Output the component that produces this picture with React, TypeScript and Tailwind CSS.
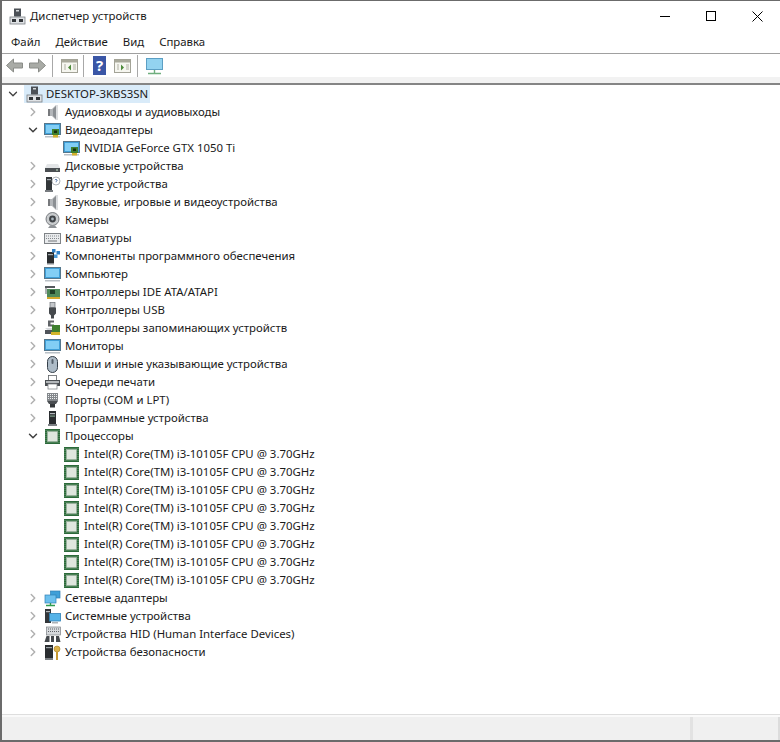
import type { ReactNode } from 'react'
import { ChevronRight, ChevronDown } from 'lucide-react'

const Svg = ({ children }: { children: ReactNode }) => (
  <svg width={17} height={17} viewBox="0 0 17 17" className="shrink-0">
    {children}
  </svg>
)

const Screen = () => (
  <>
    <rect x="0.5" y="1.5" width="16" height="11" fill="#3f9fd8" stroke="#55778c" />
    <rect x="2" y="3" width="13" height="8" fill="#82cef5" />
    <rect x="1" y="14" width="15" height="1.5" fill="#b9c0c6" />
  </>
)

const Speaker = () => (
  <>
    <path d="M4 5h4l4-4h1v15h-1l-4-4H4z" fill="#b3b6b9" />
    <path d="M9 5l3-3v13l-3-3z" fill="#8b8f93" />
    <path d="M4 5h2v7H4z" fill="#77797c" />
    <path d="M12 1h2v15h-2z" fill="#dcdee0" />
  </>
)

const icons: Record<string, ReactNode> = {
  computer: (
    <Svg>
      <rect x="5" y="0.5" width="7" height="8" fill="#4c5157" />
      <rect x="7" y="2" width="3" height="1.5" fill="#d4d8db" />
      <rect x="6" y="8" width="5" height="1" fill="#8d9296" />
      <rect x="1" y="9" width="15" height="7" fill="#dfe2e5" stroke="#7b8086" strokeWidth="0.8" />
      <rect x="3" y="11" width="4" height="3" fill="#33373b" />
      <rect x="10" y="11" width="4" height="3" fill="#33373b" />
    </Svg>
  ),
  speaker: <Svg><Speaker /></Svg>,
  monitor: <Svg><Screen /></Svg>,
  video: (
    <Svg>
      <Screen />
      <rect x="8" y="7" width="7" height="6" fill="#3f7f2f" />
      <rect x="10" y="8.5" width="3" height="2.5" fill="#16300f" />
      <rect x="9" y="13" width="5" height="2.5" fill="#d3b02c" />
    </Svg>
  ),
  disk: (
    <Svg>
      <path d="M3 6h11l2 4H1z" fill="#e3e5e7" />
      <rect x="1" y="10" width="15" height="4" fill="#4a4e52" />
      <rect x="12" y="11.5" width="2" height="1" fill="#c8e8c8" />
    </Svg>
  ),
  unknown: (
    <Svg>
      <rect x="2" y="1" width="6" height="13" fill="#33373a" />
      <rect x="3" y="3" width="4" height="1.2" fill="#a6abaf" />
      <rect x="1" y="14" width="8" height="2" fill="#777b7f" />
      <circle cx="12" cy="5" r="4" fill="#fff" stroke="#9aa0a5" strokeWidth="0.8" />
      <path d="M10.8 4q1.2-1.6 2.4 0q0 1.1-1.2 1.5v.8" fill="none" stroke="#5577aa" strokeWidth="0.9" />
    </Svg>
  ),
  camera: (
    <Svg>
      <circle cx="8.5" cy="7" r="6.5" fill="#c9ccce" stroke="#5f6368" strokeWidth="0.8" />
      <circle cx="8.5" cy="7" r="3.4" fill="#3f4347" />
      <circle cx="8.5" cy="7" r="1.4" fill="#a9b5bd" />
      <path d="M4 16h9l-2-2.5H6z" fill="#8e9296" />
    </Svg>
  ),
  keyboard: (
    <Svg>
      <rect x="0.5" y="3.5" width="16" height="10" fill="#e9ebed" stroke="#7f8387" />
      <path d="M2 6h13M2 8.5h13" stroke="#85898d" strokeWidth="1.2" strokeDasharray="1 1" />
      <path d="M4 11h9" stroke="#85898d" strokeWidth="1.2" />
    </Svg>
  ),
  software: (
    <Svg>
      <rect x="3" y="4" width="7" height="11" fill="#2a2d30" />
      <rect x="4" y="6" width="5" height="1.2" fill="#9fa5a9" />
      <rect x="8" y="1" width="3.5" height="3.5" fill="#2f7fc4" />
      <rect x="12.5" y="3" width="3.5" height="3.5" fill="#2f7fc4" />
      <rect x="10" y="6.5" width="3.5" height="3.5" fill="#4c9bd8" />
      <rect x="3" y="15" width="7" height="1.5" fill="#85898d" />
    </Svg>
  ),
  ide: (
    <Svg>
      <rect x="1" y="2" width="10" height="2" fill="#55595d" />
      <rect x="1" y="4" width="2" height="6" fill="#aeb2b5" />
      <rect x="3" y="5" width="13" height="8" fill="#4f8a5a" />
      <rect x="6" y="6" width="5" height="4" fill="#1f3f28" />
      <rect x="3" y="13" width="13" height="2" fill="#d3a92c" />
    </Svg>
  ),
  usb: (
    <Svg>
      <rect x="6" y="0.5" width="5" height="5" fill="#c4c7ca" stroke="#6c7075" strokeWidth="0.7" />
      <path d="M5 5.5h7v6l-2 2v3H7v-3l-2-2z" fill="#45494d" />
    </Svg>
  ),
  storage: (
    <Svg>
      <path d="M4 0.5h6v2H6.5v2H10v2H4z" fill="#5f6367" />
      <path d="M1 8h9l3 2.5H4z" fill="#d4d7da" />
      <rect x="1" y="10" width="8" height="4" fill="#50545a" />
      <rect x="8" y="5" width="8" height="7" fill="#3f7f2f" />
      <rect x="7" y="12" width="9" height="3" fill="#d3b52c" />
    </Svg>
  ),
  mouse: (
    <Svg>
      <rect x="3.5" y="0.5" width="10" height="16" rx="5" fill="#adbbc7" stroke="#343e48" />
      <rect x="7.5" y="3" width="2" height="5" rx="1" fill="#55606b" />
    </Svg>
  ),
  printer: (
    <Svg>
      <rect x="4.5" y="1.5" width="8" height="5" fill="#fff" stroke="#5f6367" strokeWidth="0.8" />
      <path d="M1 6h15v6H1z" fill="#4a4e52" />
      <rect x="2" y="7" width="13" height="2" fill="#b3b7ba" />
      <rect x="4" y="10" width="9" height="5" fill="#fff" stroke="#85898d" strokeWidth="0.8" />
    </Svg>
  ),
  port: (
    <Svg>
      <rect x="3" y="1" width="11" height="8" fill="#83878b" />
      <path d="M4 2.5h9M4 4.5h9M4 6.5h9" stroke="#eceef0" strokeDasharray="1 1" />
      <path d="M3 9h11l-2 3H5z" fill="#4a4e52" />
      <rect x="6" y="12" width="5" height="3.5" fill="#33373a" />
    </Svg>
  ),
  firmware: (
    <Svg>
      <rect x="5" y="1" width="7" height="13" fill="#2a2d30" />
      <rect x="6" y="3" width="5" height="1.2" fill="#b4b9bd" />
      <rect x="6" y="5.5" width="5" height="1.2" fill="#7fa08a" />
      <rect x="4" y="14" width="9" height="2" fill="#7d8185" />
    </Svg>
  ),
  cpu: (
    <Svg>
      <rect x="1" y="1" width="15" height="15" fill="#2c6a3a" />
      <path d="M1 2.5h15M1 4.5h15M1 6.5h15M1 8.5h15M1 10.5h15M1 12.5h15M1 14.5h15" stroke="#7aa582" strokeWidth="0.4" />
      <rect x="3.5" y="3.5" width="10" height="10" fill="#dfe6de" stroke="#9fb6a2" strokeWidth="0.7" />
    </Svg>
  ),
  network: (
    <Svg>
      <rect x="6.5" y="1" width="9.5" height="7" fill="#3f9fd8" stroke="#2e7fb5" strokeWidth="0.7" />
      <rect x="1" y="5" width="11" height="8" fill="#6cc0ee" stroke="#2e7fb5" strokeWidth="0.7" />
      <path d="M6.5 13v2M2 15.5h9" stroke="#2f9c50" strokeWidth="1.4" />
    </Svg>
  ),
  system: (
    <Svg>
      <rect x="1" y="1" width="6" height="14" fill="#33373a" />
      <rect x="2" y="3" width="4" height="1.2" fill="#b4b9bd" />
      <rect x="5.5" y="5.5" width="11" height="7.5" fill="#55b3e8" stroke="#2e7fb5" strokeWidth="0.8" />
      <rect x="8" y="14" width="6" height="1.5" fill="#aeb2b5" />
    </Svg>
  ),
  hid: (
    <Svg>
      <rect x="2.5" y="1" width="14" height="8" fill="#d6d9dc" stroke="#7b8085" strokeWidth="0.7" />
      <path d="M4 3h11M4 5.5h11" stroke="#5f6367" strokeDasharray="1 1" />
      <path d="M0.5 16l2-6h3v6zM7 16v-6h3v6zM12 16v-6h3l1.5 6z" fill="#44484c" />
    </Svg>
  ),
  security: (
    <Svg>
      <rect x="1" y="1" width="8" height="13" fill="#2a2d30" />
      <rect x="2" y="3" width="6" height="1.2" fill="#9fa5a9" />
      <rect x="1" y="14" width="8" height="2" fill="#7d8185" />
      <circle cx="13" cy="5" r="3" fill="#dcb24a" stroke="#a67d1f" strokeWidth="0.6" />
      <path d="M12 8h2v8h-2z" fill="#c99a32" />
    </Svg>
  ),
}

type Row = { label: string; icon: string; level: 0 | 1 | 2; open?: boolean }

const cpuName = 'Intel(R) Core(TM) i3-10105F CPU @ 3.70GHz'

const rows: Row[] = [
  { label: 'DESKTOP-3KBS3SN', icon: 'computer', level: 0, open: true },
  { label: 'Аудиовходы и аудиовыходы', icon: 'speaker', level: 1 },
  { label: 'Видеоадаптеры', icon: 'video', level: 1, open: true },
  { label: 'NVIDIA GeForce GTX 1050 Ti', icon: 'video', level: 2 },
  { label: 'Дисковые устройства', icon: 'disk', level: 1 },
  { label: 'Другие устройства', icon: 'unknown', level: 1 },
  { label: 'Звуковые, игровые и видеоустройства', icon: 'speaker', level: 1 },
  { label: 'Камеры', icon: 'camera', level: 1 },
  { label: 'Клавиатуры', icon: 'keyboard', level: 1 },
  { label: 'Компоненты программного обеспечения', icon: 'software', level: 1 },
  { label: 'Компьютер', icon: 'monitor', level: 1 },
  { label: 'Контроллеры IDE ATA/ATAPI', icon: 'ide', level: 1 },
  { label: 'Контроллеры USB', icon: 'usb', level: 1 },
  { label: 'Контроллеры запоминающих устройств', icon: 'storage', level: 1 },
  { label: 'Мониторы', icon: 'monitor', level: 1 },
  { label: 'Мыши и иные указывающие устройства', icon: 'mouse', level: 1 },
  { label: 'Очереди печати', icon: 'printer', level: 1 },
  { label: 'Порты (COM и LPT)', icon: 'port', level: 1 },
  { label: 'Программные устройства', icon: 'firmware', level: 1 },
  { label: 'Процессоры', icon: 'cpu', level: 1, open: true },
  ...Array.from({ length: 8 }, (): Row => ({ label: cpuName, icon: 'cpu', level: 2 })),
  { label: 'Сетевые адаптеры', icon: 'network', level: 1 },
  { label: 'Системные устройства', icon: 'system', level: 1 },
  { label: 'Устройства HID (Human Interface Devices)', icon: 'hid', level: 1 },
  { label: 'Устройства безопасности', icon: 'security', level: 1 },
]

function TreeRow({ row }: { row: Row }) {
  const Chevron = row.open ? ChevronDown : ChevronRight
  if (row.level === 0) {
    return (
      <div className="flex h-[18px] items-center pl-[4px]">
        <Chevron size={14} strokeWidth={2.25} className="shrink-0 text-[#404040]" />
        <div className="ml-[4px] flex h-[18px] w-[126px] items-center bg-[#d9ebf9] pl-[2px]">
          {icons[row.icon]}
          <span className="ml-[3px] whitespace-nowrap">{row.label}</span>
        </div>
      </div>
    )
  }
  if (row.level === 2) {
    return (
      <div className="flex h-[18px] items-center pl-[61px]">
        {icons[row.icon]}
        <span className="ml-[4px] whitespace-nowrap">{row.label}</span>
      </div>
    )
  }
  return (
    <div className="flex h-[18px] items-center pl-[24px]">
      <Chevron
        size={14}
        strokeWidth={2.5}
        className={`shrink-0 ${row.open ? 'text-[#404040]' : 'text-[#b0b0b0]'}`}
      />
      <div className="ml-[4px] flex items-center">
        {icons[row.icon]}
        <span className="ml-[4px] whitespace-nowrap">{row.label}</span>
      </div>
    </div>
  )
}

const Divider = () => <div className="h-[22px] w-px bg-[#a8a8a8]" />

const PaneIcon = ({ arrow }: { arrow: 'left' | 'right' }) => (
  <svg width="17" height="16" viewBox="0 0 17 16">
    <rect x="0.5" y="1.5" width="16" height="13" fill="#f6f6f0" stroke="#a3a397" />
    <rect x="1" y="2" width="15" height="2.5" fill="#a9a99b" />
    <path d="M3 7h2M3 9h2M3 11h2M12 7h3M12 9h3M12 11h3" stroke="#b0b0a4" />
    {arrow === 'left' ? <path d="M10 6.5l-3 3 3 3z" fill="#4d8a3a" /> : <path d="M7 6.5l3 3-3 3z" fill="#4d8a3a" />}
  </svg>
)

export default function App() {
  return (
    <div className="flex h-[742px] w-[780px] flex-col overflow-hidden border-l-2 border-t border-[#6b6b6b] bg-white font-['Noto_Sans','Open_Sans',sans-serif] text-[11.4px] leading-none text-[#1a1a1a]">
      <div className="flex h-[30px] items-center pl-[6px]">
        <div className="flex w-[18px] justify-center">{icons.computer}</div>
        <span className="ml-[4px]">Диспетчер устройств</span>
        <div className="ml-auto flex items-center">
          <div className="flex h-[30px] w-[46px] items-center justify-center">
            <div className="h-px w-[10px] bg-black" />
          </div>
          <div className="flex h-[30px] w-[46px] items-center justify-center">
            <div className="h-[10px] w-[10px] border border-black" />
          </div>
          <div className="flex h-[30px] w-[46px] items-center justify-center">
            <svg width="11" height="11" viewBox="0 0 11 11">
              <path d="M0.5 0.5l10 10M10.5 0.5l-10 10" stroke="#000" />
            </svg>
          </div>
        </div>
      </div>
      <div className="flex h-[23px] items-center gap-[15px] border-b border-[#a0a0a0] pl-[9px]">
        <span>Файл</span>
        <span>Действие</span>
        <span>Вид</span>
        <span>Справка</span>
      </div>
      <div className="flex h-[23px] items-center pl-[4px]">
        <svg width="17" height="15" viewBox="0 0 17 15">
          <path d="M0.5 7.5l7-6.5v4h9v5h-9v4z" fill="#a9aba6" stroke="#8a8c88" />
        </svg>
        <svg width="17" height="15" viewBox="0 0 17 15" className="ml-[6px]">
          <path d="M16.5 7.5l-7-6.5v4h-9v5h9v4z" fill="#a9aba6" stroke="#8a8c88" />
        </svg>
        <div className="ml-[6px]"><Divider /></div>
        <div className="ml-[8px]"><PaneIcon arrow="left" /></div>
        <div className="ml-[5px]"><Divider /></div>
        <div className="ml-[9px] flex h-[19px] w-[13px] items-center justify-center bg-[#3a56a6] text-[15px] font-bold text-white">?</div>
        <div className="ml-[8px]"><PaneIcon arrow="right" /></div>
        <div className="ml-[6px]"><Divider /></div>
        <svg width="17" height="18" viewBox="0 0 17 18" className="ml-[8px]">
          <rect x="0.5" y="1.5" width="16" height="11" fill="#93d3f0" stroke="#5c9fc4" />
          <path d="M8.5 13v3M2 16.5h13" stroke="#6fae7e" strokeWidth="1.4" />
        </svg>
      </div>
      <div className="h-[6px] bg-[#f2f2f2]" />
      <div className="flex-1 border-t-2 border-[#858585]">
        {rows.map((row, i) => (
          <TreeRow key={i} row={row} />
        ))}
      </div>
      <div className="h-[3px] border-t border-[#dedede] bg-[#fafafa]" />
      <div className="flex h-[25px] border-b-2 border-[#6b6b6b] bg-[#f0f0f0]">
        <div className="w-[691px] border-r-[3px] border-[#e2e2e2]" />
        <div className="flex-1 border-r-2 border-[#dcdcdc]" />
      </div>
    </div>
  )
}
